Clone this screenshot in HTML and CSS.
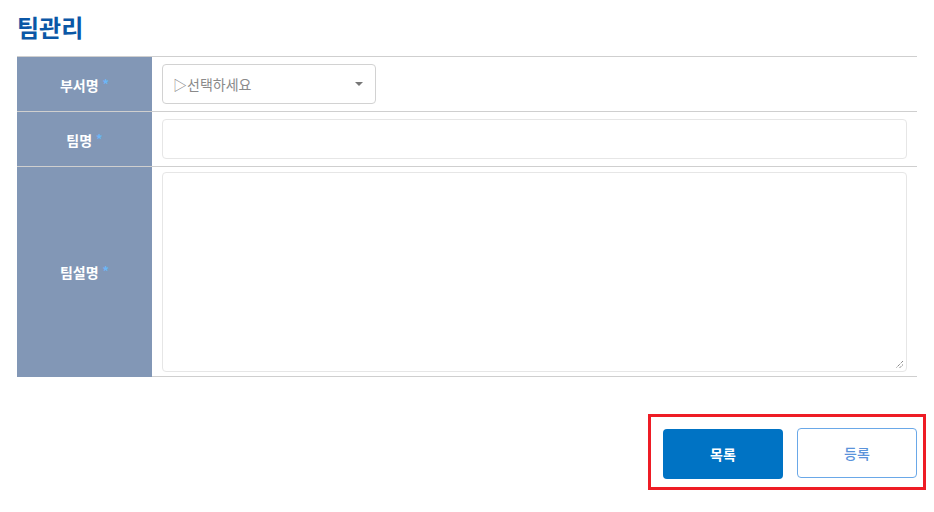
FILE: index.html
```html
<!DOCTYPE html>
<html lang="ko">
<head>
<meta charset="utf-8">
<link rel="stylesheet" href="styles.css">
</head>
<body>
<div class="page">
  <h1 class="title">팀관리</h1>
  <table class="form-table">
    <tr>
      <th class="label">부서명 <span class="req">*</span></th>
      <td class="field">
        <div class="select">
          <span class="select-text">▷선택하세요</span>
          <span class="caret"></span>
        </div>
      </td>
    </tr>
    <tr>
      <th class="label">팀명 <span class="req">*</span></th>
      <td class="field"><div class="input"></div></td>
    </tr>
    <tr class="last">
      <th class="label">팀설명 <span class="req">*</span></th>
      <td class="field">
        <div class="textarea">
          <svg class="grip" width="9" height="9" viewBox="0 0 9 9"><path d="M8 1L1 8M8 4.5L4.5 8" stroke="#555" stroke-width="1" stroke-dasharray="1 1"/></svg>
        </div>
      </td>
    </tr>
  </table>
  <div class="actions">
    <div class="highlight">
      <button class="btn btn-primary">목록</button>
      <button class="btn btn-outline">등록</button>
    </div>
  </div>
</div>
</body>
</html>
```
FILE: styles.css
```css
* { box-sizing: border-box; }
html, body { margin: 0; padding: 0; background: #fff; }
body { font-family: "Noto Sans CJK KR", "Noto Sans", sans-serif; }
.page { padding: 0 17px; }
.title {
  margin: 0;
  padding-top: 12px;
  height: 56px;
  font-size: 24px;
  line-height: 30px;
  font-weight: 700;
  color: #0b57a6;
}
.form-table {
  width: 900px;
  border-collapse: collapse;
  border-top: 1px solid #cfcfcf;
}
.form-table tr { border-bottom: 1px solid #cfcfcf; }
.form-table tr.last { border-bottom: none; }
.label {
  width: 135px;
  background: #8297b6;
  color: #fff;
  font-size: 14px;
  font-weight: 700;
  text-align: center;
  padding: 0;
}
.req { color: #6bb6f7; font-size: 13px; vertical-align: 2px; }
.field { padding: 7px 10px; height: 54px; }
.last .field { border-bottom: 1px solid #cfcfcf; height: 210px; padding: 5px 10px 4px; }
.select {
  width: 214px;
  height: 40px;
  border: 1px solid #d2d2d2;
  border-radius: 4px;
  display: flex;
  align-items: center;
  justify-content: space-between;
  padding: 0 12px 0 10px;
}
.select-text { color: #8a8a8a; font-size: 14px; }
.caret {
  width: 0; height: 0;
  border-left: 4px solid transparent;
  border-right: 4px solid transparent;
  border-top: 4px solid #777;
}
.input {
  height: 40px;
  border: 1px solid #e6e6e6;
  border-radius: 4px;
}
.textarea {
  height: 200px;
  border: 1px solid #e6e6e6;
  border-radius: 4px;
  display: flex;
  justify-content: flex-end;
  align-items: flex-end;
  padding: 0 2px 2px 0;
}
.grip { display: block; }
.actions {
  display: flex;
  justify-content: flex-end;
  margin-top: 37px;
  margin-right: -9px;
}
.highlight {
  border: 3px solid #ee1c25;
  padding: 12px 6px 8px 12px;
  display: flex;
  gap: 14px;
}
.btn {
  width: 120px;
  height: 50px;
  border-radius: 4px;
  font-family: inherit;
  font-size: 14px;
  font-weight: 700;
  cursor: pointer;
}
.btn-primary { background: #0073c4; color: #fff; border: none; }
.btn-outline {
  background: #fff;
  color: #5b93da;
  border: 1px solid #6aa8e8;
  font-weight: 500;
  margin-top: -1px;
  height: 50px;
}
```
